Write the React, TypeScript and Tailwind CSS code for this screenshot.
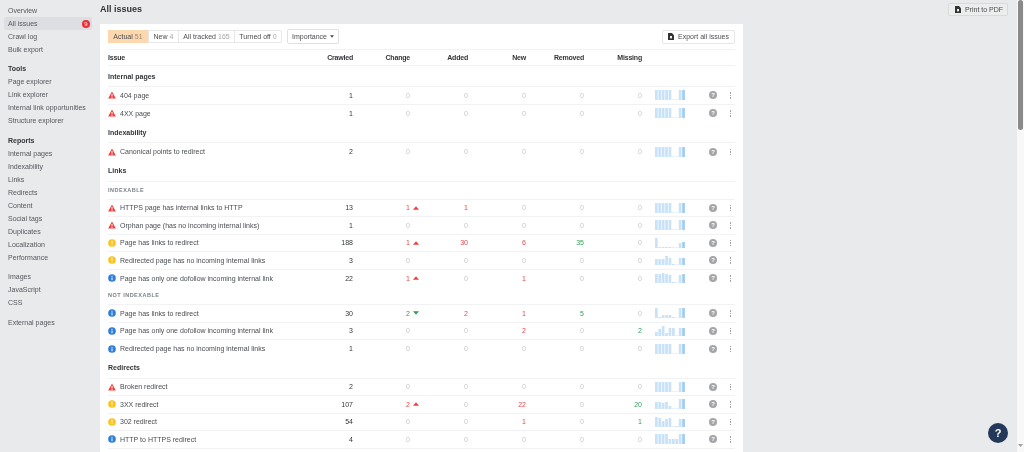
import React from "react";

const nav: { t: string; b?: boolean; sel?: boolean; mt?: string }[] = [
  { t: "Overview" },
  { t: "All issues", sel: true },
  { t: "Crawl log" },
  { t: "Bulk export" },
  { t: "Tools", b: true, mt: "mt-[6px]" },
  { t: "Page explorer" },
  { t: "Link explorer" },
  { t: "Internal link opportunities" },
  { t: "Structure explorer" },
  { t: "Reports", b: true, mt: "mt-[7px]" },
  { t: "Internal pages" },
  { t: "Indexability" },
  { t: "Links" },
  { t: "Redirects" },
  { t: "Content" },
  { t: "Social tags" },
  { t: "Duplicates" },
  { t: "Localization" },
  { t: "Performance" },
  { t: "Images", mt: "mt-[6px]" },
  { t: "JavaScript" },
  { t: "CSS" },
  { t: "External pages", mt: "mt-[7px]" },
];

const sparks: Record<string, number[]> = {
  a: [10, 10, 10, 10, 10, 0.5, 0.5, 10, 10],
  b: [10, 1, 1, 1, 1, 0.5, 0.5, 5, 6],
  c: [6, 6, 6, 9, 7, 1, 0.5, 7, 7],
  d: [9, 9, 10, 9, 8, 1, 0.5, 8, 9],
  e: [10, 1, 3, 3, 3, 1, 0.5, 10, 10],
  f: [4, 7, 10, 3, 8, 8, 0.5, 8, 8],
  g: [7, 7, 6, 7, 3, 0.5, 0.5, 10, 10],
  h: [10, 9, 6, 8, 9, 0.5, 1, 8, 8],
  i: [10, 10, 10, 10, 5, 5, 5, 10, 10],
};

function Spark({ k }: { k: string }) {
  const d = sparks[k];
  return (
    <svg width="30" height="10" viewBox="0 0 30 10" className="block">
      {d.map((h, i) => (
        <rect
          key={i}
          x={i * 3.4}
          y={10 - h}
          width="2.7"
          height={h}
          fill={i === d.length - 1 ? "#9fcdf2" : "#c9e2f8"}
        />
      ))}
    </svg>
  );
}

function Sev({ s }: { s: "e" | "w" | "n" }) {
  if (s === "e")
    return (
      <svg width="8" height="8" viewBox="0 0 10 10" className="shrink-0">
        <path d="M5 .5 9.8 9.5H.2Z" fill="#ef3e3e" />
        <rect x="4.4" y="3.6" width="1.2" height="3.2" fill="#fff" />
        <rect x="4.4" y="7.4" width="1.2" height="1.2" fill="#fff" />
      </svg>
    );
  const c = s === "w" ? "#fcc41c" : "#2f7fd8";
  return (
    <svg width="8" height="8" viewBox="0 0 10 10" className="shrink-0">
      <circle cx="5" cy="5" r="4.8" fill={c} />
      {s === "w" ? (
        <>
          <rect x="4.4" y="2.2" width="1.2" height="3.6" fill="#fff" />
          <rect x="4.4" y="6.6" width="1.2" height="1.2" fill="#fff" />
        </>
      ) : (
        <>
          <rect x="4.4" y="2.2" width="1.2" height="1.2" fill="#fff" />
          <rect x="4.4" y="4.2" width="1.2" height="3.6" fill="#fff" />
        </>
      )}
    </svg>
  );
}

function Num({ v, c }: { v: number; c?: "r" | "g" }) {
  const cl = v === 0 ? "text-[#c4c6c9]" : c === "g" ? "text-[#2f9e57]" : "text-[#e5484d]";
  return <div className={`text-right ${cl}`}>{v}</div>;
}

function DocIcon() {
  return (
    <svg width="6" height="7" viewBox="0 0 7 8" className="shrink-0">
      <path d="M0 0h4.6L7 2.4V8H0Z" fill="#333" />
      <rect x="2.4" y="3.4" width="2.2" height="2.8" fill="#fff" />
    </svg>
  );
}

type R = {
  s: "e" | "w" | "n";
  t: string;
  cr: number;
  ch?: number;
  dir?: "u" | "d";
  add?: number;
  nw?: number;
  rem?: number;
  mis?: number;
  sp?: string;
};

const COLS = "grid grid-cols-[188px_57px_57px_58px_58px_58px_58px_13px_30px_32px_18px] items-center";

function Row({ r, last }: { r: R; last?: boolean }) {
  return (
    <div className={`${COLS} h-[17.5px] ${last ? "" : "border-b border-[#f1f2f3]"}`}>
      <div className="flex items-center gap-[4px] text-[#4a4d52]">
        <Sev s={r.s} />
        <span className="whitespace-nowrap">{r.t}</span>
      </div>
      <div className="text-right text-[#333538]">{r.cr}</div>
      <div className="flex justify-end items-center">
        {r.ch ? (
          <span className={r.dir === "d" ? "text-[#2f9e57]" : "text-[#e5484d]"}>{r.ch}</span>
        ) : (
          <span className="text-[#c4c6c9]">0</span>
        )}
        {r.ch ? (
          <svg width="6" height="4" viewBox="0 0 7 4" className="ml-[3px] -mr-[9px]">
            <path d={r.dir === "d" ? "M0 0h7L3.5 4Z" : "M3.5 0 7 4H0Z"} fill={r.dir === "d" ? "#2f9e57" : "#ef3e3e"} />
          </svg>
        ) : null}
      </div>
      <Num v={r.add ?? 0} />
      <Num v={r.nw ?? 0} />
      <Num v={r.rem ?? 0} c="g" />
      <Num v={r.mis ?? 0} c="g" />
      <div className="col-start-9">
        <Spark k={r.sp ?? "a"} />
      </div>
      <div className="flex justify-end">
        <span className="w-[8px] h-[8px] rounded-full bg-[#a3a5a8] text-white text-[6px] leading-[8px] text-center font-bold">?</span>
      </div>
      <div className="flex justify-end pr-[4px]">
        <span className="flex flex-col gap-[1px]">
          <i className="block w-[1.5px] h-[1.5px] bg-[#a0a2a6]" />
          <i className="block w-[1.5px] h-[1.5px] bg-[#a0a2a6]" />
          <i className="block w-[1.5px] h-[1.5px] bg-[#a0a2a6]" />
        </span>
      </div>
    </div>
  );
}

function Group({ t }: { t: string }) {
  return <div className="h-[21px] flex items-center font-bold text-[#333538] border-b border-[#f1f2f3]">{t}</div>;
}

function Sub({ t }: { t: string }) {
  return (
    <div className="h-[18px] flex items-center text-[5.5px] font-bold tracking-[0.5px] text-[#7c7f84] border-b border-[#f1f2f3]">
      {t}
    </div>
  );
}

function Tab({ t, n, on, w }: { t: string; n: string; on?: boolean; w: string }) {
  return (
    <div
      className={`h-[13px] flex items-center justify-center gap-[2px] ${w} ${
        on ? "bg-[#fdd8ae] text-[#4a4d52]" : "text-[#4a4d52] border-l border-[#e6e7e9]"
      }`}
    >
      <span>{t}</span>
      <span className={on ? "text-[#9a8a75]" : "text-[#a3a5a8]"}>{n}</span>
    </div>
  );
}

export default function App() {
  return (
    <div className="h-screen overflow-hidden flex bg-[#e9eaec] text-[7px] leading-[13px] font-['Liberation_Sans',Arial,sans-serif] text-[#4a4d52] blur-[0.25px]">
      <aside className="w-[100px] shrink-0 pt-[4px] pl-[4px]">
        {nav.map((n) => (
          <div
            key={n.t}
            className={`h-[13px] w-[88px] pl-[4px] flex items-center justify-between ${n.mt ?? ""} ${
              n.b ? "font-bold text-[#333538]" : "text-[#54575c]"
            } ${n.sel ? "bg-[#dcdee1] rounded-[2px]" : ""}`}
          >
            <span className="whitespace-nowrap">{n.t}</span>
            {n.sel ? (
              <span className="mr-[2px] w-[8px] h-[8px] rounded-full bg-[#ef2b33] text-white text-[6px] leading-[8px] text-center">9</span>
            ) : null}
          </div>
        ))}
      </aside>

      <main className="w-[917px] shrink-0 relative flex flex-col">
        <div className="h-[24px] flex justify-between items-start shrink-0">
          <h1 className="text-[9px] leading-[19px] font-bold text-[#333538]">All issues</h1>
          <div className="mt-[3px] mr-[9px] h-[13px] w-[60px] flex items-center justify-center gap-[4px] pl-[2px] border border-[#d9dadc] rounded-[2px] bg-[#eceded] text-[#4a4d52]">
            <DocIcon />
            <span className="whitespace-nowrap">Print to PDF</span>
          </div>
        </div>

        <section className="w-[643px] flex-1 bg-white px-[8px] pt-[6px]">
          <div className="flex items-center justify-between h-[13px] mb-[6px]">
            <div className="flex items-center">
              <div className="flex rounded-[2px] border-y border-r border-[#e6e7e9] h-[13px] items-center">
                <Tab t="Actual" n="51" on w="w-[40px]" />
                <Tab t="New" n="4" w="w-[30px]" />
                <Tab t="All tracked" n="165" w="w-[56px]" />
                <Tab t="Turned off" n="0" w="w-[47px]" />
              </div>
              <div className="ml-[5px] h-[15px] w-[52px] flex items-center justify-center gap-[3px] border border-[#e0e1e3] rounded-[2px]">
                <span>Importance</span>
                <svg width="4" height="3" viewBox="0 0 5 3">
                  <path d="M0 0h5L2.5 3Z" fill="#4a4d52" />
                </svg>
              </div>
            </div>
            <div className="h-[14px] w-[73px] flex items-center justify-center gap-[4px] border border-[#e6e7e9] rounded-[2px] text-[#4a4d52]">
              <DocIcon />
              <span className="whitespace-nowrap">Export all issues</span>
            </div>
          </div>

          <div className="border-t border-[#f1f2f3]" />
          <div className={`${COLS} h-[16px] font-bold tracking-[-0.2px] text-[#333538] border-b border-[#f1f2f3]`}>
            <div>Issue</div>
            <div className="text-right">Crawled</div>
            <div className="text-right">Change</div>
            <div className="text-right">Added</div>
            <div className="text-right">New</div>
            <div className="text-right">Removed</div>
            <div className="text-right">Missing</div>
          </div>

          <Group t="Internal pages" />
          <Row r={{ s: "e", t: "404 page", cr: 1 }} />
          <Row r={{ s: "e", t: "4XX page", cr: 1 }} last />
          <Group t="Indexability" />
          <Row r={{ s: "e", t: "Canonical points to redirect", cr: 2 }} last />
          <Group t="Links" />
          <Sub t="INDEXABLE" />
          <Row r={{ s: "e", t: "HTTPS page has internal links to HTTP", cr: 13, ch: 1, dir: "u", add: 1 }} />
          <Row r={{ s: "e", t: "Orphan page (has no incoming internal links)", cr: 1 }} />
          <Row r={{ s: "w", t: "Page has links to redirect", cr: 188, ch: 1, dir: "u", add: 30, nw: 6, rem: 35, sp: "b" }} />
          <Row r={{ s: "w", t: "Redirected page has no incoming internal links", cr: 3, sp: "c" }} />
          <Row r={{ s: "n", t: "Page has only one dofollow incoming internal link", cr: 22, ch: 1, dir: "u", nw: 1, sp: "d" }} last />
          <Sub t="NOT INDEXABLE" />
          <Row r={{ s: "n", t: "Page has links to redirect", cr: 30, ch: 2, dir: "d", add: 2, nw: 1, rem: 5, sp: "e" }} />
          <Row r={{ s: "n", t: "Page has only one dofollow incoming internal link", cr: 3, add: 0, nw: 2, mis: 2, sp: "f" }} />
          <Row r={{ s: "n", t: "Redirected page has no incoming internal links", cr: 1 }} last />
          <Group t="Redirects" />
          <Row r={{ s: "e", t: "Broken redirect", cr: 2 }} />
          <Row r={{ s: "w", t: "3XX redirect", cr: 107, ch: 2, dir: "u", nw: 22, mis: 20, sp: "g" }} />
          <Row r={{ s: "w", t: "302 redirect", cr: 54, nw: 1, mis: 1, sp: "h" }} />
          <Row r={{ s: "n", t: "HTTP to HTTPS redirect", cr: 4, sp: "i" }} />
        </section>

        <div className="absolute left-[888px] top-[423px] w-[20px] h-[20px] rounded-full bg-[#24395a] text-white text-[11px] leading-[20px] text-center font-bold">?</div>
      </main>

      <div className="w-[7px] shrink-0 bg-[#f8f8f8] flex flex-col justify-between items-center pb-[5px]">
        <div className="w-[5px] h-[130px] rounded-[3px] bg-[#8a8a8a]" />
        <svg width="5" height="3" viewBox="0 0 5 3">
          <path d="M0 0h5L2.5 3Z" fill="#a0a0a0" />
        </svg>
      </div>
    </div>
  );
}
